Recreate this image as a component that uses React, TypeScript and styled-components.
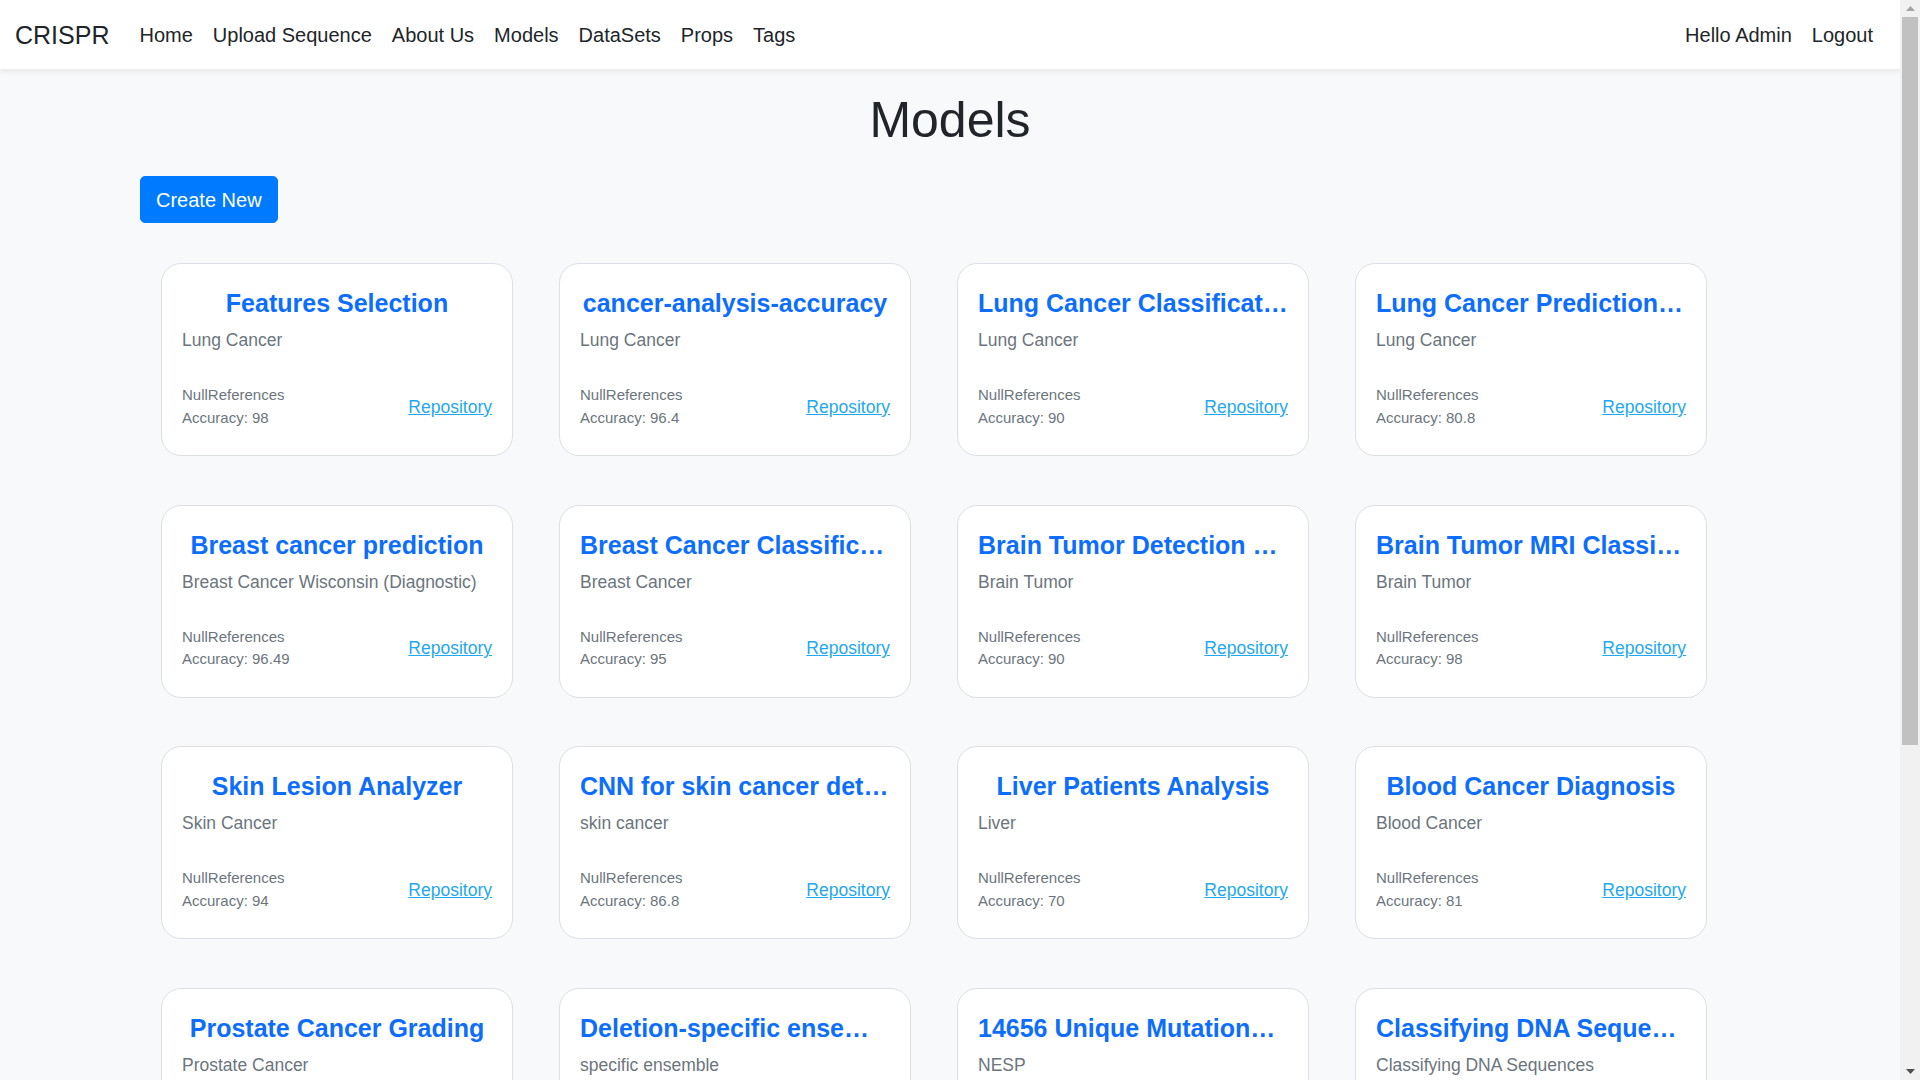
import React from "react";
import styled, { createGlobalStyle } from "styled-components";

const GlobalStyle = createGlobalStyle`
  html {
    font-size: 20px;
    overflow: hidden;
  }
  body {
    margin: 0;
    background: #f8f9fa;
    font-family: "Liberation Sans", Arial, sans-serif;
    color: #212529;
  }
  * { box-sizing: border-box; }
`;

const Shell = styled.div`
  display: flex;
  height: 100vh;
  overflow: hidden;
`;

const Page = styled.div`
  flex: 1;
  min-width: 0;
  overflow: hidden;
  background: #f8f9fa;
`;

const ScrollBar = styled.div`
  width: 20px;
  flex: none;
  display: flex;
  flex-direction: column;
  background: #f1f1f1;
`;

const ScrollButton = styled.div`
  height: 17px;
  display: flex;
  align-items: center;
  justify-content: center;
`;

const ScrollTrack = styled.div`
  flex: 1;
  display: flex;
  flex-direction: column;
`;

const ScrollThumb = styled.div`
  height: 728px;
  margin: 0 2px;
  background: #c1c1c1;
`;

const NavBar = styled.nav`
  height: 70px;
  background: #fff;
  display: flex;
  align-items: center;
  padding: 0 17px 0 15px;
  box-shadow: 0 2px 4px rgba(0, 0, 0, 0.07);
  border-bottom: 1px solid #eceeef;
  position: relative;
  z-index: 1;
`;

const Brand = styled.a`
  font-size: 25px;
  line-height: 30px;
  color: #212529;
  text-decoration: none;
  margin-right: 20px;
`;

const NavList = styled.div`
  display: flex;
  align-items: center;
`;

const NavLink = styled.a`
  font-size: 20px;
  line-height: 30px;
  padding: 10px;
  color: #212529;
  text-decoration: none;
`;

const Spacer = styled.div`
  flex: 1;
`;

const Main = styled.main`
  padding: 20px 140px 359px;
`;

const PageTitle = styled.h1`
  margin: 0 0 26px;
  font-size: 50px;
  line-height: 60px;
  font-weight: 400;
  text-align: center;
  color: #212529;
`;

const CreateButton = styled.button`
  font-family: inherit;
  font-size: 20px;
  line-height: 30px;
  padding: 7.5px 15px;
  border: 1px solid #007bff;
  background: #007bff;
  color: #fff;
  border-radius: 5px;
  cursor: pointer;
`;

const Grid = styled.div`
  margin: 40px 0 0 21px;
  display: grid;
  grid-template-columns: repeat(4, 352px);
  column-gap: 46px;
  row-gap: 48.6px;
`;

const Card = styled.div`
  height: 193px;
  background: #fff;
  border: 1px solid #dcdfe3;
  border-radius: 20px;
  padding: 24px 20px 0;
  display: flex;
  flex-direction: column;
`;

const CardTitle = styled.h5`
  margin: 0 0 9px;
  font-size: 25px;
  line-height: 30px;
  font-weight: 700;
  color: #0d6efd;
  text-align: center;
  white-space: nowrap;
  overflow: hidden;
  text-overflow: ellipsis;
`;

const CardSubtitle = styled.div`
  font-size: 17.5px;
  line-height: 26.25px;
  color: #6c757d;
  white-space: nowrap;
  overflow: hidden;
  text-overflow: ellipsis;
`;

const CardFooter = styled.div`
  margin-top: 30.75px;
  display: flex;
  align-items: center;
  justify-content: space-between;
`;

const Meta = styled.div`
  font-size: 15px;
  line-height: 22.5px;
  color: #6c757d;
`;

const RepoLink = styled.a`
  font-size: 17.5px;
  line-height: 26px;
  color: #1fa8f0;
  text-decoration: underline;
`;

type Model = { title: string; subtitle: string; accuracy: string };

const models: Model[] = [
  { title: "Features Selection", subtitle: "Lung Cancer", accuracy: "98" },
  { title: "cancer-analysis-accuracy", subtitle: "Lung Cancer", accuracy: "96.4" },
  { title: "Lung Cancer Classification", subtitle: "Lung Cancer", accuracy: "90" },
  { title: "Lung Cancer Prediction Model", subtitle: "Lung Cancer", accuracy: "80.8" },
  { title: "Breast cancer prediction", subtitle: "Breast Cancer Wisconsin (Diagnostic)", accuracy: "96.49" },
  { title: "Breast Cancer Classification", subtitle: "Breast Cancer", accuracy: "95" },
  { title: "Brain Tumor Detection using CNN", subtitle: "Brain Tumor", accuracy: "90" },
  { title: "Brain Tumor MRI Classification", subtitle: "Brain Tumor", accuracy: "98" },
  { title: "Skin Lesion Analyzer", subtitle: "Skin Cancer", accuracy: "94" },
  { title: "CNN for skin cancer detection", subtitle: "skin cancer", accuracy: "86.8" },
  { title: "Liver Patients Analysis", subtitle: "Liver", accuracy: "70" },
  { title: "Blood Cancer Diagnosis", subtitle: "Blood Cancer", accuracy: "81" },
  { title: "Prostate Cancer Grading", subtitle: "Prostate Cancer", accuracy: "" },
  { title: "Deletion-specific ensemble", subtitle: "specific ensemble", accuracy: "" },
  { title: "14656 Unique Mutations Analysis", subtitle: "NESP", accuracy: "" },
  { title: "Classifying DNA Sequences", subtitle: "Classifying DNA Sequences", accuracy: "" },
];

const navItems = ["Home", "Upload Sequence", "About Us", "Models", "DataSets", "Props", "Tags"];

function Arrow({ up, color }: { up: boolean; color: string }) {
  return (
    <svg width="9" height="5" viewBox="0 0 9 5">
      <path d={up ? "M0 5 L4.5 0 L9 5 Z" : "M0 0 L4.5 5 L9 0 Z"} fill={color} />
    </svg>
  );
}

export default function App() {
  return (
    <>
      <GlobalStyle />
      <Shell>
        <Page>
          <NavBar>
            <Brand href="#">CRISPR</Brand>
            <NavList>
              {navItems.map((n) => (
                <NavLink key={n} href="#">
                  {n}
                </NavLink>
              ))}
            </NavList>
            <Spacer />
            <NavList>
              <NavLink href="#">Hello Admin</NavLink>
              <NavLink href="#">Logout</NavLink>
            </NavList>
          </NavBar>
          <Main>
            <PageTitle>Models</PageTitle>
            <CreateButton>Create New</CreateButton>
            <Grid>
              {models.map((m) => (
                <Card key={m.title}>
                  <CardTitle>{m.title}</CardTitle>
                  <CardSubtitle>{m.subtitle}</CardSubtitle>
                  <CardFooter>
                    <Meta>
                      <div>NullReferences</div>
                      <div>Accuracy: {m.accuracy}</div>
                    </Meta>
                    <RepoLink href="#">Repository</RepoLink>
                  </CardFooter>
                </Card>
              ))}
            </Grid>
          </Main>
        </Page>
        <ScrollBar>
          <ScrollButton>
            <Arrow up color="#a3a3a3" />
          </ScrollButton>
          <ScrollTrack>
            <ScrollThumb />
          </ScrollTrack>
          <ScrollButton>
            <Arrow up={false} color="#505050" />
          </ScrollButton>
        </ScrollBar>
      </Shell>
    </>
  );
}
